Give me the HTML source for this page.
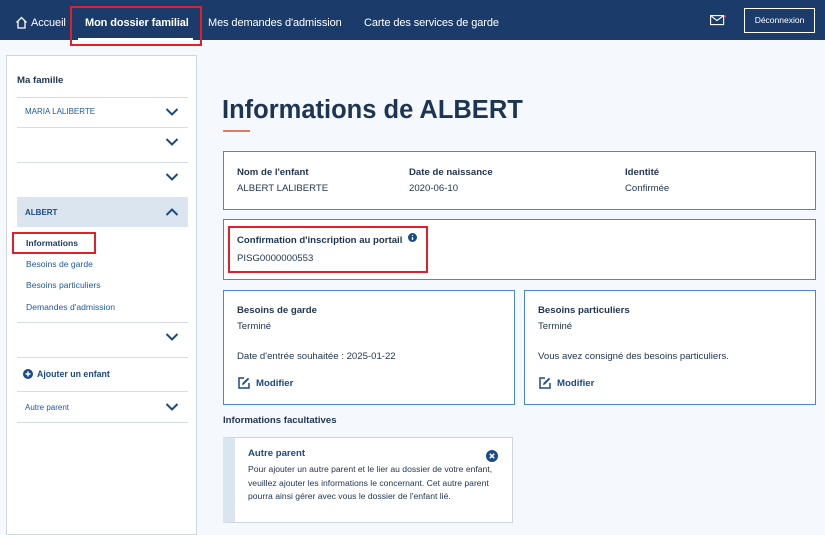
<!DOCTYPE html>
<html><head><meta charset="utf-8"><style>
*{margin:0;padding:0;box-sizing:border-box}
body{width:825px;height:531px;overflow:hidden;background:#f5f8fc;font-family:"Liberation Sans",sans-serif;position:relative;color:#223654}
.a{position:absolute;white-space:nowrap}
.hd{position:absolute;left:0;top:0;width:825px;height:40px;background:#1b3c6b}
.nav{color:#fff;font-size:11px;top:17px;letter-spacing:-0.1px}
.box{position:absolute;background:#fff;border:1px solid #4a88c7}
.lbl{font-size:9.6px;font-weight:bold;color:#223654}
.val{font-size:9.6px;color:#223654}
.line{position:absolute;left:17px;width:171px;height:1px;background:#d6dce3}
.chev{position:absolute;left:165px;width:14px;height:10px}
.sl{font-size:8.6px;color:#1f5aa0}
.red{position:absolute;border:2px solid #e0202a}
</style></head><body>
<div class="hd"></div>
<svg class="a" style="left:15px;top:16px" width="13" height="13" viewBox="0 0 13 13"><path d="M1.5 6.5L6.5 1.5L11.5 6.5M3 5.5V12H10V5.5" fill="none" stroke="#fff" stroke-width="1.3"/></svg>
<div class="a nav" style="left:31px">Accueil</div>
<div class="a nav" style="left:85px;font-weight:bold">Mon dossier familial</div>
<div class="a" style="left:78px;top:38px;width:115px;height:3px;background:#fff"></div>
<div class="red" style="left:70px;top:6px;width:132px;height:40px"></div>
<div class="a nav" style="left:208px">Mes demandes d'admission</div>
<div class="a nav" style="left:364px">Carte des services de garde</div>
<svg class="a" style="left:710px;top:15px" width="16" height="11" viewBox="0 0 16 11"><rect x="0.6" y="0.6" width="13" height="9" fill="none" stroke="#fff" stroke-width="1.1"/><path d="M0.6 0.6L7 5.5L13.6 0.6" fill="none" stroke="#fff" stroke-width="1.1"/><circle cx="15" cy="1.5" r="1.2" fill="#e84040"/></svg>
<div class="a" style="left:744px;top:8px;width:71px;height:25px;border:1px solid #fff;color:#fff;font-size:8.5px;text-align:center;line-height:23px">Déconnexion</div>

<div class="a" style="left:6px;top:55px;width:191px;height:480px;background:#fff;border:1px solid #d0d6de"></div>
<div class="a" style="left:17px;top:75px;font-size:9.6px;font-weight:bold">Ma famille</div>
<div class="line" style="top:97px"></div>
<div class="a sl" style="left:25px;top:107px;font-size:8px">MARIA LALIBERTE</div>
<div class="line" style="top:127px"></div>
<div class="line" style="top:162px"></div>
<div class="a" style="left:17px;top:197px;width:171px;height:30px;background:#dbe5ef"></div>
<div class="a sl" style="left:25px;top:208px;font-weight:bold;font-size:8px;color:#1b4a8a">ALBERT</div>
<div class="a" style="left:26px;top:238px;font-size:8.6px;font-weight:bold;color:#1b3c6b">Informations</div>
<div class="red" style="left:12px;top:232px;width:84px;height:22px"></div>
<div class="a sl" style="left:26px;top:259px">Besoins de garde</div>
<div class="a sl" style="left:26px;top:280px">Besoins particuliers</div>
<div class="a sl" style="left:26px;top:302px">Demandes d'admission</div>
<div class="line" style="top:322px"></div>
<div class="line" style="top:357px"></div>
<svg class="a" style="left:23px;top:369px" width="10" height="10"><circle cx="5" cy="5" r="5" fill="#1b4a8a"/><path d="M5 2.5V7.5M2.5 5H7.5" stroke="#fff" stroke-width="1.5"/></svg>
<div class="a" style="left:37px;top:369px;font-size:8.8px;font-weight:bold;color:#1b4a8a">Ajouter un enfant</div>
<div class="line" style="top:391px"></div>
<div class="a sl" style="left:25px;top:403px;font-size:8px">Autre parent</div>
<div class="line" style="top:422px"></div>
<svg class="chev" style="top:107px" viewBox="0 0 14 10"><path d="M1.5 2L7 7.5L12.5 2" fill="none" stroke="#1b4a8a" stroke-width="2"/></svg>
<svg class="chev" style="top:137px" viewBox="0 0 14 10"><path d="M1.5 2L7 7.5L12.5 2" fill="none" stroke="#1b4a8a" stroke-width="2"/></svg>
<svg class="chev" style="top:172px" viewBox="0 0 14 10"><path d="M1.5 2L7 7.5L12.5 2" fill="none" stroke="#1b4a8a" stroke-width="2"/></svg>
<svg class="chev" style="top:207px" viewBox="0 0 14 10"><path d="M1.5 8L7 2.5L12.5 8" fill="none" stroke="#1b4a8a" stroke-width="2"/></svg>
<svg class="chev" style="top:332px" viewBox="0 0 14 10"><path d="M1.5 2L7 7.5L12.5 2" fill="none" stroke="#1b4a8a" stroke-width="2"/></svg>
<svg class="chev" style="top:402px" viewBox="0 0 14 10"><path d="M1.5 2L7 7.5L12.5 2" fill="none" stroke="#1b4a8a" stroke-width="2"/></svg>

<div class="a" style="left:222px;top:96px;font-size:25.5px;font-weight:bold;color:#1d3554">Informations de ALBERT</div>
<div class="a" style="left:223px;top:130px;width:27px;height:2px;background:#e07a5a"></div>

<div class="box" style="left:223px;top:151px;width:593px;height:59px"></div>
<div class="a lbl" style="left:237px;top:167px">Nom de l'enfant</div>
<div class="a val" style="left:237px;top:183px">ALBERT LALIBERTE</div>
<div class="a lbl" style="left:409px;top:167px">Date de naissance</div>
<div class="a val" style="left:409px;top:183px">2020-06-10</div>
<div class="a lbl" style="left:625px;top:167px">Identité</div>
<div class="a val" style="left:625px;top:183px">Confirmée</div>

<div class="box" style="left:223px;top:219px;width:593px;height:61px"></div>
<div class="a lbl" style="left:237px;top:235px">Confirmation d'inscription au portail</div>
<svg class="a" style="left:408px;top:233px" width="9" height="9"><circle cx="4.5" cy="4.5" r="4.5" fill="#1b4a8a"/><path d="M4.5 4V7M4.5 2V3" stroke="#fff" stroke-width="1.3"/></svg>
<div class="a val" style="left:237px;top:253px">PISG0000000553</div>
<div class="red" style="left:228px;top:226px;width:200px;height:47px"></div>

<div class="box" style="left:223px;top:290px;width:292px;height:115px"></div>
<div class="a lbl" style="left:237px;top:305px">Besoins de garde</div>
<div class="a val" style="left:237px;top:321px">Terminé</div>
<div class="a val" style="left:237px;top:351px">Date d'entrée souhaitée : 2025-01-22</div>
<svg class="a" style="left:238px;top:377px" width="12" height="12" viewBox="0 0 12 12"><path d="M6 1H1V11H11V6" fill="none" stroke="#1b4a8a" stroke-width="1.5"/><path d="M4 8L4.5 6L10 0.8L11.2 2L5.8 7.5Z" fill="#1b4a8a"/></svg>
<div class="a" style="left:256px;top:378px;font-size:9.6px;font-weight:bold;color:#1b4a8a">Modifier</div>

<div class="box" style="left:524px;top:290px;width:292px;height:115px"></div>
<div class="a lbl" style="left:538px;top:305px">Besoins particuliers</div>
<div class="a val" style="left:538px;top:321px">Terminé</div>
<div class="a val" style="left:538px;top:351px">Vous avez consigné des besoins particuliers.</div>
<svg class="a" style="left:539px;top:377px" width="12" height="12" viewBox="0 0 12 12"><path d="M6 1H1V11H11V6" fill="none" stroke="#1b4a8a" stroke-width="1.5"/><path d="M4 8L4.5 6L10 0.8L11.2 2L5.8 7.5Z" fill="#1b4a8a"/></svg>
<div class="a" style="left:557px;top:378px;font-size:9.6px;font-weight:bold;color:#1b4a8a">Modifier</div>

<div class="a lbl" style="left:223px;top:415px">Informations facultatives</div>
<div class="a" style="left:223px;top:437px;width:290px;height:86px;background:#fff;border:1px solid #cfd5dc;border-left:12px solid #dbe5ef"></div>
<div class="a" style="left:248px;top:448px;font-size:9.6px;font-weight:bold;color:#1b4a8a">Autre parent</div>
<svg class="a" style="left:486px;top:450px" width="12" height="12"><circle cx="6" cy="6" r="6" fill="#1b4a8a"/><path d="M3.8 3.8L8.2 8.2M8.2 3.8L3.8 8.2" stroke="#fff" stroke-width="1.5"/></svg>
<div class="a" style="left:248px;top:463px;font-size:8.6px;line-height:13.5px;color:#223654">Pour ajouter un autre parent et le lier au dossier de votre enfant,<br>veuillez ajouter les informations le concernant. Cet autre parent<br>pourra ainsi gérer avec vous le dossier de l'enfant lié.</div>
</body></html>
